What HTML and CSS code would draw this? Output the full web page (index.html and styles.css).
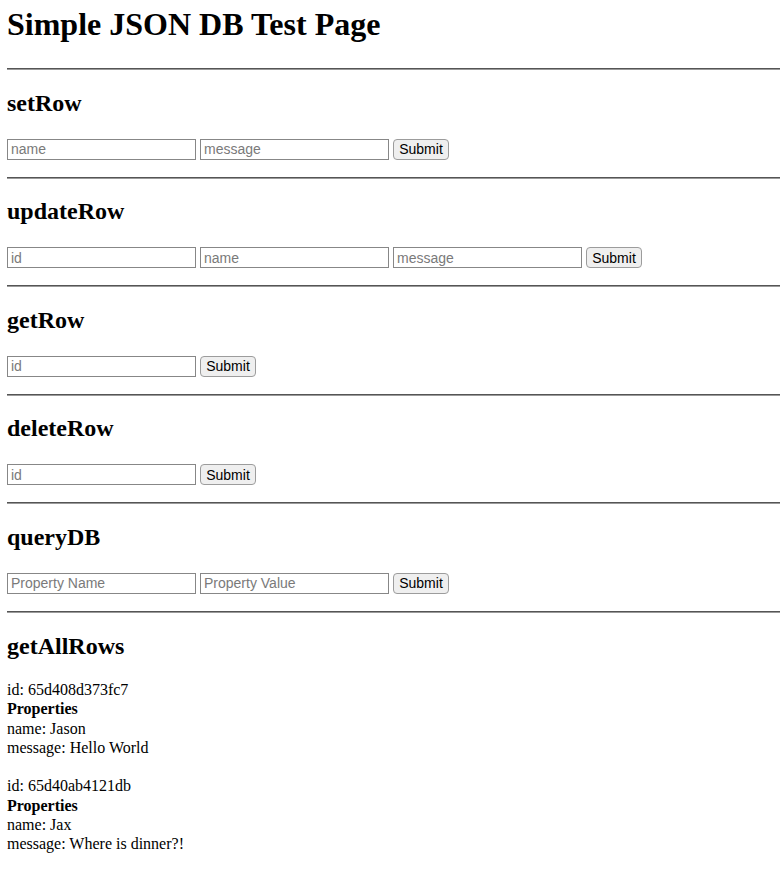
FILE: index.html
```html
<!DOCTYPE html>
<html lang="en">
<head>
<meta charset="utf-8">
<title>Simple JSON DB Test Page</title>
<link rel="stylesheet" href="styles.css">
</head>
<body>
<h1 class="title">Simple JSON DB Test Page</h1>

<section class="block first">
  <hr class="rule">
  <h2 class="heading">setRow</h2>
  <form class="row">
    <input class="field" type="text" placeholder="name">
    <input class="field" type="text" placeholder="message">
    <button class="btn" type="button">Submit</button>
  </form>
</section>

<section class="block">
  <hr class="rule">
  <h2 class="heading">updateRow</h2>
  <form class="row">
    <input class="field" type="text" placeholder="id">
    <input class="field" type="text" placeholder="name">
    <input class="field" type="text" placeholder="message">
    <button class="btn" type="button">Submit</button>
  </form>
</section>

<section class="block">
  <hr class="rule">
  <h2 class="heading">getRow</h2>
  <form class="row">
    <input class="field" type="text" placeholder="id">
    <button class="btn" type="button">Submit</button>
  </form>
</section>

<section class="block">
  <hr class="rule">
  <h2 class="heading">deleteRow</h2>
  <form class="row">
    <input class="field" type="text" placeholder="id">
    <button class="btn" type="button">Submit</button>
  </form>
</section>

<section class="block">
  <hr class="rule">
  <h2 class="heading">queryDB</h2>
  <form class="row">
    <input class="field" type="text" placeholder="Property Name">
    <input class="field" type="text" placeholder="Property Value">
    <button class="btn" type="button">Submit</button>
  </form>
</section>

<section class="block last">
  <hr class="rule">
  <h2 class="heading">getAllRows</h2>
  <div class="entries">
    <div class="entry">
      <div class="line">id: 65d408d373fc7</div>
      <div class="line strong">Properties</div>
      <div class="line">name: Jason</div>
      <div class="line">message: Hello World</div>
    </div>
    <div class="entry">
      <div class="line">id: 65d40ab4121db</div>
      <div class="line strong">Properties</div>
      <div class="line">name: Jax</div>
      <div class="line">message: Where is dinner?!</div>
    </div>
  </div>
</section>
</body>
</html>
```

FILE: styles.css
```css
html, body {
  background: #ffffff;
}

body {
  margin: 0;
  padding: 8px 0 0 7px;
  font-family: "Liberation Serif", "Times New Roman", serif;
  color: #000000;
}

.title {
  margin: 0;
  font-size: 32px;
  line-height: 33px;
  font-weight: bold;
}

.block {
  margin-bottom: 17px;
}

.block.first {
  margin-top: 27px;
}

.rule {
  display: block;
  margin: 0;
  height: 0;
  border: 0;
  border-top: 1px solid #555555;
  border-bottom: 1px solid #9a9a9a;
}

.heading {
  margin: 18.6px 0 22px;
  font-size: 24px;
  line-height: 28px;
  font-weight: bold;
}

.block.last .heading {
  margin-bottom: 20.4px;
}

.row {
  display: flex;
  align-items: center;
  gap: 4px;
  margin: 0;
  height: 21px;
}

.field {
  box-sizing: border-box;
  width: 189px;
  height: 21px;
  margin: 0;
  padding: 1px 3px;
  border: 1px solid #878787;
  border-radius: 0;
  background: #ffffff;
  font-family: "Liberation Sans", Arial, sans-serif;
  font-size: 14px;
  color: #000000;
  outline: none;
}

.field::placeholder {
  color: #7a7a7a;
  opacity: 1;
}

.btn {
  box-sizing: border-box;
  width: 56px;
  height: 21px;
  margin: 0;
  padding: 0;
  border: 1px solid #9c9c9c;
  border-radius: 4px;
  background: #efefef;
  font-family: "Liberation Sans", Arial, sans-serif;
  font-size: 14px;
  color: #000000;
}

.entries {
  display: flex;
  flex-direction: column;
  gap: 19.3px;
  font-size: 16px;
  line-height: 19.3px;
}

.strong {
  font-weight: bold;
}
```
